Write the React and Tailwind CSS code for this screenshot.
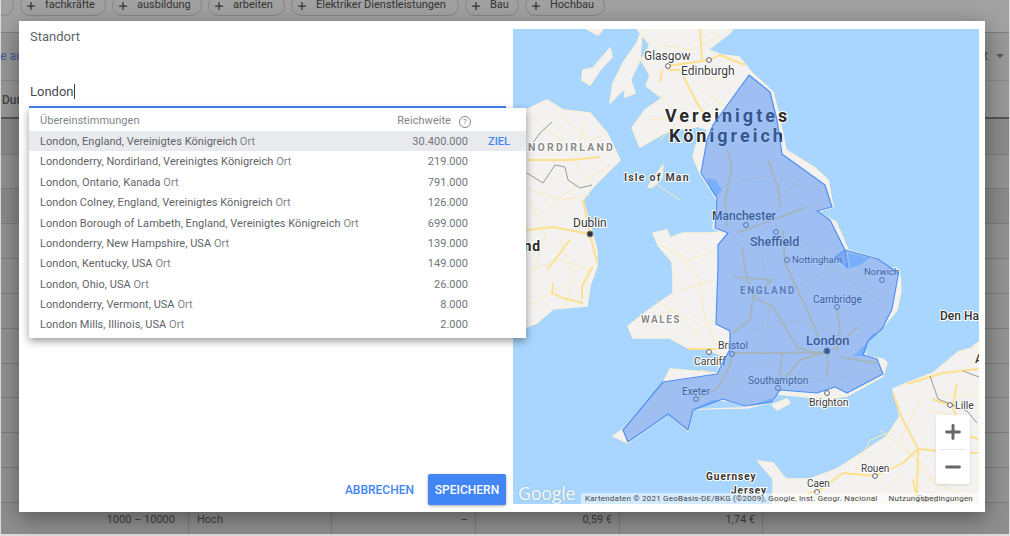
import React from 'react';
import { Plus, Minus } from 'lucide-react';

const chips = [
  { label: 'fachkräfte', cls: 'w-[86px]' },
  { label: 'ausbildung', cls: 'w-[90px]' },
  { label: 'arbeiten', cls: 'w-[77px]' },
  { label: 'Elektriker Dienstleistungen', cls: 'w-[168px]' },
  { label: 'Bau', cls: 'w-[54px]' },
  { label: 'Hochbau', cls: 'w-[80px]' },
];

const rowStyles = [
  'h-[36px] bg-[#8a8a8a]',
  'h-[34px] bg-[#919191]',
  'h-[35px] bg-[#8a8a8a]',
  'h-[35px] bg-[#919191]',
  'h-[35px] bg-[#929292]',
  'h-[35px] bg-[#929292]',
  'h-[35px] bg-[#929292]',
  'h-[34px] bg-[#929292]',
  'h-[35px] bg-[#929292]',
  'h-[35px] bg-[#929292]',
  'h-[35px] bg-[#929292]',
];

const results = [
  { name: 'London, England, Vereinigtes Königreich', reach: '30.400.000', active: true },
  { name: 'Londonderry, Nordirland, Vereinigtes Königreich', reach: '219.000' },
  { name: 'London, Ontario, Kanada', reach: '791.000' },
  { name: 'London Colney, England, Vereinigtes Königreich', reach: '126.000' },
  { name: 'London Borough of Lambeth, England, Vereinigtes Königreich', reach: '699.000' },
  { name: 'Londonderry, New Hampshire, USA', reach: '139.000' },
  { name: 'London, Kentucky, USA', reach: '149.000' },
  { name: 'London, Ohio, USA', reach: '26.000' },
  { name: 'Londonderry, Vermont, USA', reach: '8.000' },
  { name: 'London Mills, Illinois, USA', reach: '2.000' },
];

const land = [
  // Great Britain
  'M637 29 L650 45 L641 60 L650 75 L646 86 L662 98 L645 110 L632 128 L640 147 L652 140 L670 130 L693 127 L707 130 L696 145 L693 157 L700 173 L717 200 L713 228 L723 232 L708 233 L683 233 L670 238 L667 230 L653 233 L658 245 L672 262 L673 276 L673 293 L650 309 L628 326 L633 338 L670 338 L690 349 L707 349 L723 356 L717 373 L670 369 L663 383 L623 429 L613 436 L628 443 L668 414 L688 431 L693 409 L747 408 L773 402 L777 394 L827 399 L847 396 L883 376 L887 363 L883 359 L865 356 L870 343 L887 322 L897 310 L901 290 L900 276 L898 273 L878 259 L848 250 L836 222 L817 212 L833 207 L828 180 L815 168 L786 150 L780 120 L773 92 L752 73 L739 57 L722 55 L708 50 L730 33 L733 29 Z',
  // Ireland
  'M513 118 L530 108 L547 100 L563 110 L590 113 L607 133 L620 160 L610 170 L592 188 L583 200 L590 225 L597 250 L597 266 L590 286 L587 306 L553 309 L537 323 L513 332 Z',
  // Northern France and Belgium
  'M979 346 L958 352 L933 373 L907 383 L893 389 L900 416 L887 436 L857 456 L837 469 L810 479 L787 479 L783 476 L773 463 L758 461 L773 479 L773 504 L979 504 Z',
  // Islands
  'M583 70 L593 68 L610 48 L612 57 L600 70 L590 85 L582 80 Z',
  'M623 77 L630 78 L635 93 L625 97 Z',
  'M610 103 L613 83 L623 63 L637 43 L642 29 L640 60 L628 85 Z',
  'M587 29 L603 29 L598 35 Z',
  'M648 187 L663 165 L662 177 L653 187 Z',
  'M772 405 L787 399 L790 403 L777 410 Z',
  'M973 346 L979 342 L979 352 Z',
];

const water = [
  'M707 178 L716 180 L722 190 L716 197 L710 190 Z',
  'M853 356 L865 345 L873 333 L880 335 L868 350 L864 356 Z',
  'M848 253 L870 258 L860 265 L850 268 Z',
  'M693 409 L712 400 L730 402 L745 407 Z',
  'M750 406 L772 398 L772 403 Z',
  'M697 127 L707 130 L704 137 L690 134 Z',
];

const majorRoads = [
  'M700 29 L702 60',
  'M668 66 L709 60 L720 55 L745 65',
  'M668 70 L680 70 L697 103 L710 123',
  'M662 70 L660 82',
  'M527 160 L570 160 L600 157',
  'M527 230 L553 227 L590 234 L597 263',
  'M590 234 L583 200',
  'M547 270 L570 240',
  'M553 283 L552 293 L563 298 L583 303',
  'M593 266 L582 286 L582 299',
  'M727 150 L732 167 L725 200 L727 227',
  'M768 160 L778 187 L780 207',
  'M737 233 L807 207',
  'M742 247 L745 270 L753 297 L750 320 L733 333',
  'M733 277 L772 280 L753 297 L773 307 L787 330 L797 347 L813 353 L827 352',
  'M732 353 L783 353 L827 352',
  'M780 377 L782 353',
  'M778 387 L800 360 L823 353',
  'M827 377 L828 353',
  'M840 357 L877 363',
  'M837 310 L840 330 L837 353',
  'M783 230 L785 263 L813 323 L820 343',
  'M858 327 L833 350',
  'M688 349 L707 349 L730 349',
  'M696 399 L717 389 L730 366 L732 354',
  'M893 393 L902 418 L918 449 L917 493',
  'M918 449 L940 451 L978 453',
  'M843 473 L875 476 L903 463 L918 449',
  'M907 384 L943 373 L978 369',
  'M932 399 L950 405',
  'M957 383 L953 406 L960 433 L978 439',
  'M807 493 L817 492 L843 473',
  'M913 479 L917 500',
];

const minorRoads = [
  'M660 95 L680 120 L660 140',
  'M700 90 L730 110',
  'M650 180 L680 200',
  'M530 190 L565 200 L590 195',
  'M530 270 L560 260 L590 270',
  'M540 215 L570 190 L610 165',
  'M680 255 L700 280 L705 320 L715 345',
  'M655 300 L690 320',
  'M760 240 L770 300 L765 350',
  'M800 240 L860 290 L880 300',
  'M750 330 L800 320 L850 340',
  'M700 370 L760 385',
  'M860 480 L880 500',
  'M930 410 L970 420',
  'M880 430 L930 470',
  'M720 35 L690 50 L660 45',
  'M710 80 L730 70',
  'M650 120 L690 115',
  'M560 115 L590 140 L605 135',
  'M540 125 L575 150',
  'M585 120 L575 160 L590 185',
  'M530 200 L545 235 L535 270',
  'M560 240 L575 280 L565 305',
  'M530 305 L565 285',
  'M660 245 L690 260 L715 250',
  'M680 290 L715 280',
  'M640 325 L670 310 L700 335',
  'M690 335 L715 320',
  'M740 180 L775 175 L810 190',
  'M720 210 L760 215 L800 180',
  'M790 290 L830 270 L870 280',
  'M760 360 L790 375 L830 380 L870 370',
  'M690 385 L660 400 L640 425',
  'M730 380 L720 400',
  'M855 470 L870 440 L895 430',
  'M920 400 L900 440 L940 490',
  'M960 470 L930 480 L975 500',
  'M940 395 L975 395',
  'M800 495 L830 500',
  'M885 490 L905 470',
];

const borders = [
  'M552 122 L540 133 L530 147',
  'M527 173 L543 183 L555 165 L565 167 L568 180 L580 188 L592 185',
  'M930 376 L938 399 L950 404 L967 411 L977 423',
  'M963 371 L979 377',
];

const markers = [
  [668, 66], [709, 60], [746, 225], [776, 232], [787, 260], [882, 280], [837, 307],
  [732, 354], [709, 352], [778, 388], [696, 399], [827, 393], [950, 405], [875, 476], [817, 492],
];

const labels = [
  { t: 'Glasgow', x: 644, y: 60, cls: 'text-[12px] fill-[#3c3c3c]' },
  { t: 'Edinburgh', x: 681, y: 75, cls: 'text-[12px] fill-[#3c3c3c]' },
  { t: 'Vereinigtes', x: 665, y: 122, cls: 'text-[18px] font-bold tracking-[3px] fill-[#2b2b2b]' },
  { t: 'Königreich', x: 669, y: 142, cls: 'text-[18px] font-bold tracking-[3px] fill-[#2b2b2b]' },
  { t: 'NORDIRLAND', x: 528, y: 151, cls: 'text-[10.5px] font-bold tracking-[2.2px] fill-[#8a8a8a]' },
  { t: 'Isle of Man', x: 624, y: 181, cls: 'text-[10.5px] font-bold tracking-[1.2px] fill-[#444444]' },
  { t: 'Dublin', x: 573, y: 227, cls: 'text-[12px] fill-[#333333]' },
  { t: 'Irland', x: 499, y: 251, cls: 'text-[14px] font-bold tracking-[1px] fill-[#2b2b2b]' },
  { t: 'Manchester', x: 712, y: 220, cls: 'text-[12px] font-medium fill-[#3c3c3c]' },
  { t: 'Sheffield', x: 750, y: 246, cls: 'text-[12.5px] font-medium fill-[#3c3c3c]' },
  { t: 'Nottingham', x: 792, y: 263, cls: 'text-[9.5px] fill-[#3c3c3c]' },
  { t: 'Norwich', x: 864, y: 275, cls: 'text-[9.5px] fill-[#3c3c3c]' },
  { t: 'ENGLAND', x: 740, y: 294, cls: 'text-[10px] font-bold tracking-[1.5px] fill-[#7a7a7a]' },
  { t: 'Cambridge', x: 813, y: 303, cls: 'text-[10px] fill-[#3c3c3c]' },
  { t: 'Den Haag', x: 940, y: 320, cls: 'text-[12px] font-medium fill-[#333333]' },
  { t: 'WALES', x: 641, y: 323, cls: 'text-[10px] font-bold tracking-[1.5px] fill-[#8a8a8a]' },
  { t: 'London', x: 806, y: 345, cls: 'text-[13px] font-medium fill-[#333333]' },
  { t: 'Bristol', x: 718, y: 349, cls: 'text-[10.5px] fill-[#3c3c3c]' },
  { t: 'Antwerpen', x: 975, y: 363, cls: 'text-[12px] font-medium fill-[#333333]' },
  { t: 'Cardiff', x: 694, y: 365, cls: 'text-[10.5px] fill-[#3c3c3c]' },
  { t: 'Southampton', x: 748, y: 384, cls: 'text-[10px] fill-[#3c3c3c]' },
  { t: 'Exeter', x: 682, y: 395, cls: 'text-[10px] fill-[#3c3c3c]' },
  { t: 'Brighton', x: 809, y: 406, cls: 'text-[10.5px] fill-[#3c3c3c]' },
  { t: 'Lille', x: 955, y: 409, cls: 'text-[10.5px] fill-[#3c3c3c]' },
  { t: 'Rouen', x: 861, y: 472, cls: 'text-[10px] fill-[#3c3c3c]' },
  { t: 'Guernsey', x: 706, y: 480, cls: 'text-[10px] font-bold tracking-[1px] fill-[#333333]' },
  { t: 'Caen', x: 807, y: 487, cls: 'text-[10px] fill-[#3c3c3c]' },
  { t: 'Jersey', x: 731, y: 494, cls: 'text-[10px] font-bold tracking-[1px] fill-[#333333]' },
];

const area = 'M749 75 L770 92 L777 120 L782 154 L825 185 L832 207 L817 211 L830 220 L845 250 L878 259 L898 273 L898 276 L892 309 L882 329 L868 341 L863 355 L877 359 L883 374 L847 393 L835 387 L817 393 L780 390 L772 402 L745 406 L723 399 L693 410 L688 430 L668 414 L628 442 L623 430 L663 382 L717 374 L730 349 L730 331 L716 324 L718 266 L718 245 L728 233 L715 228 L717 198 L701 173 L707 140 L713 125 Z';

const MapView = () => {
  return (
    <div className="relative w-[466px] h-[475px] shrink-0 overflow-hidden bg-[#a8d6fe]">
      <svg viewBox="513 29 466 475" className="w-[466px] h-[475px] font-['Roboto',sans-serif]">
        {land.map((d, i) => (
          <path key={i} d={d} fill="#f3f2f0" stroke="#f9f1dc" strokeWidth="1.5" strokeLinejoin="round" />
        ))}
        {water.map((d, i) => (
          <path key={i} d={d} fill="#a8d6fe" />
        ))}
        {minorRoads.map((d, i) => (
          <path key={i} d={d} fill="none" stroke="#fbe9b8" strokeWidth="0.9" strokeLinejoin="round" />
        ))}
        {majorRoads.map((d, i) => (
          <path key={i} d={d} fill="none" stroke="#fde08c" strokeWidth="1.9" strokeLinejoin="round" />
        ))}
        {borders.map((d, i) => (
          <path key={i} d={d} fill="none" stroke="#8d8d8d" strokeWidth="0.9" />
        ))}
        {markers.map(([cx, cy], i) => (
          <circle key={i} cx={cx} cy={cy} r="2.4" fill="#ffffff" stroke="#5f5f5f" strokeWidth="1" />
        ))}
        <circle cx="590" cy="234" r="3" fill="#333333" stroke="#777777" strokeWidth="1" />
        <circle cx="827" cy="351" r="3" fill="#333333" stroke="#777777" strokeWidth="1" />
        {labels.map((l) => (
          <text
            key={l.t}
            x={l.x}
            y={l.y}
            stroke="#ffffff"
            strokeWidth="2"
            className={`[paint-order:stroke] ${l.cls}`}
          >
            {l.t}
          </text>
        ))}
        <path d={area} fill="#4285f4" fillOpacity="0.48" stroke="#4f8ff6" strokeWidth="1.2" strokeLinejoin="round" />
        <path d="M835 257 L845 250 L848 268 Z" fill="#4285f4" fillOpacity="0.35" stroke="#4f8ff6" strokeWidth="1" />
        <text x="917" y="502" className="text-[9px] fill-[#8a8a8a]">Paris</text>
      </svg>
      <div className="absolute left-[5px] bottom-[1px] text-[18px] leading-[20px] font-medium tracking-[-0.3px] text-white opacity-90 font-['Open_Sans',sans-serif] [text-shadow:0_0_2px_#8aa]">Google</div>
      <div className="absolute right-0 bottom-0 w-[398px] h-[11px] pl-[4px] pr-[6px] flex justify-between items-center bg-white/50 text-[8px] leading-[11px] tracking-[0.22px] text-[#444444] whitespace-nowrap">
        <span>Kartendaten © 2021 GeoBasis-DE/BKG (©2009), Google, Inst. Geogr. Nacional</span>
        <span>Nutzungsbedingungen</span>
      </div>
      <div className="absolute right-[9px] bottom-[20px] w-[34px] h-[69px] bg-white rounded-[2px] shadow-sm flex flex-col items-center text-[#666666]">
        <div className="h-[34px] flex items-center justify-center"><Plus size={22} strokeWidth={3.2} /></div>
        <div className="w-[26px] border-t border-[#e6e6e6]"></div>
        <div className="h-[34px] flex items-center justify-center"><Minus size={22} strokeWidth={3.2} /></div>
      </div>
    </div>
  );
};

const LocationDropdown = () => {
  return (
    <div className="absolute z-10 left-[10px] top-[79px] w-[497px] h-[230px] bg-white shadow-[0_3px_8px_rgba(0,0,0,0.4)] text-[11px] tracking-[0.04px] text-[#5f6368]">
      <div className="flex items-center h-[23px] pl-[11px] pt-[4px] text-[#80868b]">
        <span className="flex-1">Übereinstimmungen</span>
        <span>Reichweite</span>
        <span className="w-[75px] pl-[8px] flex">
          <span className="w-[12px] h-[12px] rounded-full border border-[#80868b] text-[8px] leading-[10px] text-center">?</span>
        </span>
      </div>
      {results.map((r) => (
        <div key={r.name} className={`flex items-center h-[20.4px] pl-[11px] pt-[2px] ${r.active ? 'bg-[#e8eaed]' : ''}`}>
          <span className="flex-1 whitespace-nowrap">
            {r.name} <span className="text-[#80868b]">Ort</span>
          </span>
          <span className="text-right text-[#70757a]">{r.reach}</span>
          <span className="w-[58px] pl-[20px] font-medium text-[#4285f4]">{r.active ? 'ZIEL' : ''}</span>
        </div>
      ))}
    </div>
  );
};

const App = () => {
  return (
    <div className="relative w-[1010px] h-[536px] overflow-hidden bg-[#dcdcdc] font-['Roboto',sans-serif]">
      {/* dimmed page behind the dialog */}
      <div className="h-[534px] mx-[1px] bg-[#989898] text-[#333333]">
        <div className="h-[33px] border-b border-[#7d7d7d] bg-[#a2a2a2] overflow-hidden">
          <div className="flex gap-[6px] pl-[19px] -mt-[5px] text-[11px]">
            <div className="w-[30px] h-[21px] -ml-[36px] shrink-0 rounded-full border border-[#868686]"></div>
            {chips.map((c) => (
              <div key={c.label} className={`${c.cls} h-[21px] shrink-0 flex items-center gap-[8px] pl-[4px] rounded-full border border-[#868686] whitespace-nowrap`}>
                <Plus size={12} strokeWidth={2.5} className="shrink-0" />
                {c.label}
              </div>
            ))}
          </div>
        </div>
        <div className="h-[48px] border-b border-[#888888] flex items-center justify-between text-[12px]">
          <span className="text-[#3f5c9a] -ml-[28px] -mt-[2px]">Spalte auswählen</span>
          <span className="mr-[5px] -mt-[1px] flex items-center gap-[8px] text-[#555555]">
            t
            <span className="w-0 h-0 border-x-[4px] border-x-transparent border-t-[4px] border-t-[#555555]"></span>
          </span>
        </div>
        <div className="h-[38px] border-b-2 border-[#555555] flex items-center pl-[1px] pt-[2px] text-[12px] font-medium text-[#444444]">Durchschnitt</div>
        {rowStyles.map((cls, i) => (
          <div key={i} className={`${cls} border-b border-[#7c7c7c]`}></div>
        ))}
        <div className="h-[31px] flex items-center bg-[#8f8f8f] text-[11px] text-[#3d3d3d]">
          <div className="w-[187px] pr-[13px] pt-[4px] text-right">1000 – 10000</div>
          <div className="w-[143px] h-full flex items-center pl-[8px] pt-[4px] border-l border-[#7a7a7a]">Hoch</div>
          <div className="w-[144px] h-full flex items-center justify-end pr-[7px] pt-[4px] border-l border-[#7a7a7a]">–</div>
          <div className="w-[144px] h-full flex items-center justify-end pr-[7px] pt-[4px] border-l border-[#7a7a7a]">0,59 €</div>
          <div className="w-[144px] h-full flex items-center justify-end pr-[7px] pt-[4px] border-l border-[#7a7a7a] border-r">1,74 €</div>
        </div>
      </div>

      {/* dialog */}
      <div className="absolute left-[19px] top-[21px] w-[966px] h-[491px] bg-white shadow-[0_6px_22px_rgba(0,0,0,0.4)] flex py-[8px]">
        <div className="relative w-[494px] shrink-0 flex flex-col pl-[10px] pr-[7px] text-[#5f6368] text-[13px]">
          <div className="leading-[15px] pl-[1px]">Standort</div>
          <div className="mt-[28px] h-[36px] pl-[1px] pt-[11px] leading-[18px] border-b-2 border-[#4285f4] text-[#4a4d52] flex items-start">
            London<span className="w-px h-[15px] bg-[#3c4043] mt-[1px]"></span>
          </div>
          <LocationDropdown />
          <div className="mt-auto -mb-[1px] flex items-center justify-end gap-[14px] text-[12px] font-medium">
            <button className="text-[#4285f4]">ABBRECHEN</button>
            <button className="w-[78px] h-[31px] bg-[#4285f4] text-white rounded-[2px] shadow-[0_1px_3px_rgba(0,0,0,0.35)]">SPEICHERN</button>
          </div>
        </div>
        <MapView />
      </div>
    </div>
  );
};

export default App;
